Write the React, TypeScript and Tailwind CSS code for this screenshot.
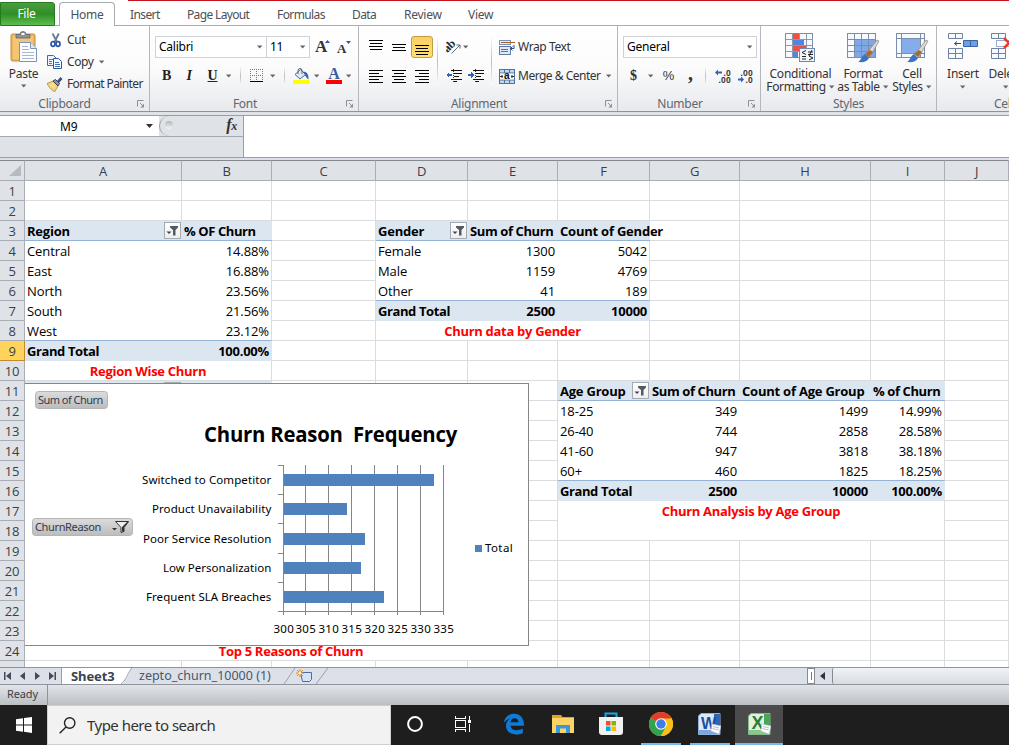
import React from "react";

type P = { className?: string };

const Caret = ({ className = "" }: P) => (
  <svg className={`shrink-0 ${className}`} width="6" height="4" viewBox="0 0 6 4">
    <path d="M0 0.5h5.4L2.7 3.5z" fill="#666" />
  </svg>
);

const Sep = ({ className = "" }: P) => (
  <div className={`w-px shrink-0 bg-linear-to-b from-white via-[#b9bcc2] to-white ${className}`} />
);

const Launcher = () => (
  <svg width="8" height="8" viewBox="0 0 8 8" fill="none" stroke="#8b8f96">
    <path d="M.5 6.5v-6h6" />
    <path d="M3 3l3.500 3.500" />
    <path d="M7 3.500V7.500H3.500z" fill="#8b8f96" stroke="none" />
  </svg>
);

const Lines = ({ rows }: { rows: [number, number][] }) => (
  <svg width="14" height={rows.length * 3} viewBox={`0 0 14 ${rows.length * 3}`} shapeRendering="crispEdges">
    {rows.map(([x, w], i) => (
      <rect key={i} x={x} y={i * 3} width={w} height="1" fill="#000" />
    ))}
  </svg>
);

const PasteIcon = () => (
  <svg width="28" height="32" viewBox="0 0 28 32">
    <rect x="1" y="3" width="24" height="27" rx="1.5" fill="#ecb65c" stroke="#c98f3a" />
    <rect x="3" y="5" width="20" height="23" fill="#f3c676" />
    <path d="M6 7V3.5h4a3 3 0 0 1 6 0h4V7z" fill="#8d939b" stroke="#5d636b" strokeWidth=".8" />
    <rect x="11.5" y="2" width="3" height="2" fill="#fff" />
    <path d="M9.500 11.500h11l6 6v13h-17z" fill="#fbfcfe" stroke="#7d93b5" />
    <path d="M20.500 11.500v6h6" fill="#dfe7f3" stroke="#7d93b5" />
    <path d="M12 15.500h6M12 18.500h7M12 21.500h12M12 24.500h12M12 27.500h12" stroke="#a9b6cb" />
  </svg>
);

const CutIcon = () => (
  <svg width="12" height="15" viewBox="0 0 12 15" fill="none">
    <path d="M2.500 .5L7 9M8.800 .5L4.600 9" stroke="#6d7e97" strokeWidth="1.900" />
    <ellipse cx="3" cy="11" rx="2" ry="2.300" stroke="#2a56a5" strokeWidth="1.700" />
    <ellipse cx="8" cy="11" rx="2" ry="2.300" stroke="#2a56a5" strokeWidth="1.700" />
  </svg>
);

const CopyIcon = () => (
  <svg width="16" height="14" viewBox="0 0 16 14">
    <path d="M.5 .5h6l2.500 2.500v7.500h-8.500z" fill="#eef4fc" stroke="#3f69ab" />
    <path d="M2 4.500h4M2 6.500h3M2 8.500h3" stroke="#4f80c6" />
    <path d="M6.500 3.500h5l3 3v7h-8z" fill="#f6faff" stroke="#2b56a0" />
    <path d="M8 7.500h4M8 9.500h5M8 11.500h5" stroke="#3f70bc" />
  </svg>
);

const PainterIcon = () => (
  <svg width="16" height="15" viewBox="0 0 16 15">
    <path d="M0 6.500l6-2.500 5 5-3 5.500c-3-.5-6-4-8-8z" fill="#f2d377" stroke="#a9812c" strokeWidth=".7" />
    <path d="M3 7.500l3 3M5 6l3 4" stroke="#fff3c4" />
    <path d="M6 4l2.500-1.500 4 4L11 9z" fill="#8d93a0" stroke="#34383f" strokeWidth=".9" />
    <path d="M10 4l3.500-4L15.500 2 12 6z" fill="#3a4d8b" />
  </svg>
);

const BorderIcon = () => (
  <svg width="14" height="14" viewBox="0 0 14 14" shapeRendering="crispEdges">
    <path d="M0 .5h13M0 6.500h13M.5 0v12M6.500 0v12M12.500 0v12" stroke="#777" strokeDasharray="1 1" />
    <rect y="12" width="13" height="1" fill="#000" />
  </svg>
);

const BucketIcon = () => (
  <svg width="16" height="16" viewBox="0 0 16 16">
    <path d="M2 6.500L7.500 1.500l5 5L7 11z" fill="#dfe7f2" stroke="#4e6a96" />
    <path d="M5 6V2.500a2 2 0 0 1 4 0V6" fill="none" stroke="#5a6980" />
    <path d="M10 3.500c4 0 6 3 5.500 8-1.500-1-3-3-3.500-4.500z" fill="#3468b5" />
    <rect y="12" width="16" height="4" fill="#ff0" />
  </svg>
);

const FontColorIcon = () => (
  <div className="flex w-[16px] flex-col items-center">
    <span className="h-[12px] font-[Liberation_Serif] text-[16px] font-bold leading-[12px] text-[#3c5e9c]">A</span>
    <div className="h-[4px] w-[16px] bg-[#f00]" />
  </div>
);

const OrientIcon = () => (
  <svg width="16" height="16" viewBox="0 0 16 16">
    <text x="-1" y="10" transform="rotate(-45 5 9)" fontFamily="Liberation Serif" fontWeight="bold" fontSize="12" fill="#222">ab</text>
    <path d="M5.500 14.500L14 6M14 9.500V6h-3.500" stroke="#666" fill="none" />
  </svg>
);

const IndentIcon = ({ flip = false }: { flip?: boolean }) => (
  <svg width="16" height="14" viewBox="0 0 16 14" shapeRendering="crispEdges">
    <path d="M5 1.500h11M8 4.500h8M8 7.500h5M5 10.500h11M7 12.500h4" stroke="#111" />
    <path d="M7.500 0v14" stroke="#333" strokeDasharray="1 1" />
    {flip ? (
      <path d="M0 5h3V3l3 3-3 3V7H0z" fill="#2d62bd" />
    ) : (
      <path d="M6 5H3V3L0 6l3 3V7h3z" fill="#2d62bd" />
    )}
  </svg>
);

const WrapIcon = () => (
  <svg width="16" height="15" viewBox="0 0 16 15">
    <rect x=".5" y=".5" width="11" height="4" fill="#e4ecf7" stroke="#7d93b5" />
    <rect x=".5" y="6.500" width="11" height="8" fill="#dfe8f5" stroke="#5f7ba6" />
    <path d="M2 2.500h14" stroke="#a5622b" />
    <path d="M2 9.500h7M2 11.500h7" stroke="#a5622b" />
    <path d="M15 5v3.500h-3M13.500 6.500l-2 2 2 2" stroke="#2c4f8f" fill="none" />
  </svg>
);

const MergeIcon = () => (
  <svg width="16" height="15" viewBox="0 0 16 15">
    <rect x=".5" y=".5" width="15" height="14" fill="#c5d6ee" stroke="#50709f" />
    <path d="M5.500 0v4M10.500 0v4M5.500 11v4M10.500 11v4M0 4h16M0 11h16" stroke="#50709f" />
    <rect x="1" y="4.500" width="14" height="6" fill="#f4f7fc" />
    <text x="5" y="10" fontFamily="Liberation Sans" fontWeight="bold" fontSize="10" fill="#111">a</text>
    <path d="M1 7.500h3M3 6v3M15 7.500h-3M13 6v3" stroke="#333" />
  </svg>
);

const DecIcon = ({ inc }: { inc: boolean }) => (
  <svg width="17" height="14" viewBox="0 0 17 14">
    <text x={inc ? 8.5 : 3.5} y="6.500" textLength={inc ? 7 : 12} fontFamily="Liberation Sans" fontSize="8.500" fontWeight="bold" fill="#333">{inc ? ".0" : ".00"}</text>
    <text x={inc ? 3.5 : 8.5} y="13.500" textLength={inc ? 12 : 7} fontFamily="Liberation Sans" fontSize="8.500" fontWeight="bold" fill="#333">{inc ? ".00" : ".0"}</text>
    {inc ? (
      <path d="M7 2.500H3V.5L0 3.500l3 3v-2h4z" fill="#2d62bd" />
    ) : (
      <path d="M1 9.500h3v-2l3 3-3 3v-2H1z" fill="#2d62bd" />
    )}
  </svg>
);

const Brush = () => (
  <g>
    <path d="M30 7l2 1-9 16-4-3z" fill="#d9d9d9" stroke="#8a8177" strokeWidth=".7" />
    <path d="M23 17l3 2-4 5-4-3z" fill="#a66a36" />
    <path d="M18 21l4 4c-2 4-6 4.500-11 4 3-1 3-6 7-8z" fill="#3d72c2" />
  </g>
);

const CondIcon = () => (
  <svg width="32" height="30" viewBox="0 0 32 30">
    <rect x=".5" y=".5" width="27" height="24" fill="#f6f9fd" stroke="#7c8da8" />
    <path d="M7.500 0v25M14.500 0v25M21.500 0v25M0 6.500h28M0 12.500h28M0 18.500h28" stroke="#8b9ab2" />
    <path d="M8 1h6v5H8zM8 13h13v5H8z" fill="#ee5142" />
    <path d="M8 7h11v5H8zM8 19h5v6H8z" fill="#4f87e0" />
    <rect x="14.500" y="15.500" width="15" height="13" fill="#f2f5fa" stroke="#7089ae" />
    <path d="M21 17.500l-4 2 4 2M17 23.500h4M17 26h4M23 19h5M23 21.500h5M27 17l-3 6M24 23l4 2-4 2" stroke="#222" fill="none" />
  </svg>
);

const TableIcon = () => (
  <svg width="33" height="31" viewBox="0 0 33 31">
    <rect x=".5" y=".5" width="28" height="24" fill="#f6f9fd" stroke="#7c8da8" />
    <rect x="8" y="7" width="20" height="17" fill="#7fa8e8" />
    <path d="M7.500 0v25M14.500 0v25M21.500 0v25M0 6.500h28M0 12.500h28M0 18.500h28" stroke="#7c8da8" />
    <Brush />
  </svg>
);

const StyleIcon = () => (
  <svg width="33" height="31" viewBox="0 0 33 31">
    <rect x=".5" y=".5" width="28" height="24" fill="#f6f9fd" stroke="#7c8da8" />
    <path d="M5.500 0v25M24.500 0v25M0 5.500h28M0 20.500h28" stroke="#7c8da8" />
    <rect x="6" y="6" width="18" height="14" fill="#85adec" />
    <Brush />
  </svg>
);

const InsertIcon = () => (
  <svg width="30" height="28" viewBox="0 0 30 28">
    <path d="M.5 .5h14v5H.5zM7.500 .5v5M.5 15.500h14v10H.5zM7.500 15.500v10M.5 20.500h14" fill="#f6f9fd" stroke="#6f83a5" />
    <path d="M15.500 7.500h14v6h-14zM22.500 7.500v6" fill="#6f9ce6" stroke="#3b62a6" />
    <path d="M13 10.500H7M9 8.500l-2.500 2L9 12.500" stroke="#2a4a76" fill="none" />
  </svg>
);

const DeleteIcon = () => (
  <svg width="30" height="28" viewBox="0 0 30 28">
    <path d="M.5 .5h14v5H.5zM7.500 .5v5M.5 15.500h14v10H.5zM7.500 15.500v10M.5 20.500h14" fill="#f6f9fd" stroke="#6f83a5" />
    <rect x="5.500" y="7.500" width="14" height="6" fill="none" stroke="#3b5fa0" strokeDasharray="1 1" />
    <path d="M13 5l10 10M13 15L23 5" stroke="#ee3a24" strokeWidth="2.500" />
  </svg>
);

const Group = ({ label, w, children, pad = "", launcher = true }: { label: string; w: string; children: React.ReactNode; pad?: string; launcher?: boolean }) => (
  <div className={`flex h-[85px] shrink-0 flex-col border-r border-[#b4b7bd] ${w}`}>
    <div className="h-[70px]">{children}</div>
    <div className={`relative flex h-[15px] items-center justify-center text-[#62666d] ${pad}`}>
      {label}
      {launcher && <div className="absolute right-[4px] top-[4px]"><Launcher /></div>}
    </div>
  </div>
);

const Big = ({ icon, a, b, w }: { icon: React.ReactNode; a: string; b?: string; w: string }) => (
  <div className={`flex shrink-0 flex-col items-center ${w}`}>
    <div className="flex h-[41px] pt-[7px]">{icon}</div>
    <div className="h-[13px] whitespace-nowrap leading-[13px]">{a}</div>
    <div className="flex h-[13px] items-center gap-[3px] whitespace-nowrap leading-[13px] tracking-[-0.35px]">
      {b}
      <Caret />
    </div>
  </div>
);

const FilterButton = () => (
  <div className="flex h-[17px] w-[17px] shrink-0 items-center justify-center border border-[#a5abb3] bg-linear-to-b from-white to-[#eceef1]">
    <svg width="13" height="11" viewBox="0 0 13 11">
      <path d="M4 1h8v1.500L9.500 5v5.500h-2.500V5L4 2.500z" fill="#555a62" />
      <path d="M.5 6.500h5L3 9z" fill="#444" />
    </svg>
  </div>
);

type Cell = { t?: string; b?: boolean; r?: boolean; filter?: boolean; span?: number; caption?: boolean };
const COLS = ["A", "B", "C", "D", "E", "F", "G", "H", "I", "J"];

const head = (t: string, filter = false): Cell => ({ t, b: true, filter });
const bold = (t: string, r = true): Cell => ({ t, b: true, r });
const num = (t: string): Cell => ({ t, r: true });

const cells: Record<string, Cell> = {
  A3: head("Region", true), B3: head("% OF Churn"),
  A4: { t: "Central" }, B4: num("14.88%"),
  A5: { t: "East" }, B5: num("16.88%"),
  A6: { t: "North" }, B6: num("23.56%"),
  A7: { t: "South" }, B7: num("21.56%"),
  A8: { t: "West" }, B8: num("23.12%"),
  A9: bold("Grand Total", false), B9: bold("100.00%"),
  A10: { t: "Region Wise Churn", span: 2, caption: true },
  A11: head(""), B11: head(""),
  D3: head("Gender", true), E3: head("Sum of Churn"), F3: head("Count of Gender"),
  D4: { t: "Female" }, E4: num("1300"), F4: num("5042"),
  D5: { t: "Male" }, E5: num("1159"), F5: num("4769"),
  D6: { t: "Other" }, E6: num("41"), F6: num("189"),
  D7: bold("Grand Total", false), E7: bold("2500"), F7: bold("10000"),
  D8: { t: "Churn data by Gender", span: 3, caption: true },
  F11: head("Age Group", true), G11: head("Sum of Churn"), H11: head("Count of Age Group"), I11: head("% of Churn"),
  F12: { t: "18-25" }, G12: num("349"), H12: num("1499"), I12: num("14.99%"),
  F13: { t: "26-40" }, G13: num("744"), H13: num("2858"), I13: num("28.58%"),
  F14: { t: "41-60" }, G14: num("947"), H14: num("3818"), I14: num("38.18%"),
  F15: { t: "60+" }, G15: num("460"), H15: num("1825"), I15: num("18.25%"),
  F16: bold("Grand Total", false), G16: bold("2500"), H16: bold("10000"), I16: bold("100.00%"),
  F17: { t: "Churn Analysis by Age Group", span: 4, caption: true },
  F18: { t: "", span: 4, caption: true },
  A24: { t: "Top 5 Reasons of Churn", span: 5, caption: true },
};

const SPAN: Record<number, string> = { 2: "col-span-2", 3: "col-span-3", 4: "col-span-4", 5: "col-span-5" };
const GRID = "grid grid-cols-[25px_157px_90px_104px_92px_90px_92px_90px_131px_74px_64px]";
const LAST_BODY: Record<string, boolean> = { B: true, F: true, I: true };

function CellBox({ id, row }: { id: string; row: number }) {
  const c = cells[id];
  const col = id[0];
  if (!c) return <div className="border-b border-r border-[#dadcdd]" />;
  if (c.caption)
    return (
      <div className={`flex items-center justify-center border-r border-[#dadcdd] font-bold tracking-[-0.3px] text-[#f00] ${SPAN[c.span!]} ${row === 17 ? "" : "border-b"}`}>
        {c.t}
      </div>
    );
  const below = cells[col + (row + 1)];
  const blueLine = (c.b && !c.r && below && !below.caption) || (!c.b && below?.b);
  const edge = LAST_BODY[col] && !(col === "F" && row > 10) && !c.b;
  return (
    <div
      className={`flex min-w-0 items-center justify-between whitespace-nowrap pl-[2px] ${c.b ? "bg-[#dce6f1] font-bold" : ""} ${blueLine ? "border-b border-b-[#95b3d7]" : ""} ${edge ? "border-r border-r-[#dadcdd] pr-[2px]" : "pr-[3px]"}`}
    >
      {c.r && <span />}
      <span className={c.b ? (c.r ? "tracking-[-0.25px]" : /Churn$|Total/.test(c.t ?? "") ? "tracking-[-0.4px]" : "tracking-[-0.22px]") : "tracking-[-0.1px]"}>{c.t}</span>
      {c.filter && <div className="-mr-[2px]"><FilterButton /></div>}
    </div>
  );
}

function SheetRow({ row }: { row: number }) {
  const out: React.ReactNode[] = [];
  for (let i = 0; i < COLS.length; ) {
    const id = COLS[i] + row;
    out.push(<CellBox key={id} id={id} row={row} />);
    i += cells[id]?.span ?? 1;
  }
  return (
    <div className={`${GRID} h-[20px]`}>
      <div
        className={`flex items-center justify-center border-b border-r text-[#3b3f46] ${
          row === 9 ? "border-[#c28a30] bg-[#ffd45c]" : "border-[#a9adb5] bg-[#dfe2e6]"
        }`}
      >
        {row < 25 ? row : ""}
      </div>
      {out}
    </div>
  );
}

const bars = [
  { y: 91, w: 151, l: "Switched to Competitor" },
  { y: 120, w: 64, l: "Product Unavailability" },
  { y: 150, w: 82, l: "Poor Service Resolution" },
  { y: 179, w: 78, l: "Low Personalization" },
  { y: 208, w: 101, l: "Frequent SLA Breaches" },
];
const LABEL_W = [129, 119, 128, 108, 125];
const gridX = [0, 22, 45, 68, 91, 114, 137, 160];

const Chart = () => (
  <div className="absolute left-[25px] top-[223px] h-[263px] w-[504px] border border-l-0 border-[#868686] bg-white">
    <svg width="503" height="261" viewBox="0 0 503 261" fontFamily="'Noto Sans', sans-serif" fontSize="11.5">
      <defs>
        <linearGradient id="btn" x1="0" y1="0" x2="0" y2="1">
          <stop offset="0" stopColor="#dcdcdc" />
          <stop offset="1" stopColor="#bcbcbc" />
        </linearGradient>
      </defs>
      <rect x="10.500" y="7.500" width="72" height="17" rx="3" fill="url(#btn)" stroke="#b5b5b5" />
      <text x="13" y="20" textLength="65" fill="#333a4a" fontSize="11">Sum of Churn</text>
      <rect x="7.500" y="134.500" width="100" height="17" rx="3" fill="url(#btn)" stroke="#b5b5b5" />
      <text x="10" y="147" textLength="66" fill="#333a4a" fontSize="11">ChurnReason</text>
      <path d="M87 144h5l-2.500 2.500z" fill="#333" />
      <path d="M90.500 137.500h13l-4.500 6v4l-3 1v-5z" fill="#eee" stroke="#333" />
      <path d="M97 143l5-5h1.500l-4.500 5.500v4h-2z" fill="#333" />
      <text x="179" y="58" fontFamily="'Open Sans', sans-serif" fontWeight="bold" fontSize="20.500" textLength="253" lengthAdjust="spacingAndGlyphs" letterSpacing="-0.2">{"Churn Reason\u00a0 Frequency"}</text>
      <g shapeRendering="crispEdges" fill="#868686">
        {gridX.map((x) => (
          <rect key={x} x={258 + x} y="81" width="1" height="150" />
        ))}
        {[81, 110, 139, 169, 198, 227].map((y) => (
          <rect key={y} x="253" y={y} width="6" height="1" />
        ))}
        <rect x="258" y="227" width="161" height="1" />
      </g>
      {bars.map((b, i) => (
        <g key={b.l}>
          <rect x="259" y={b.y - 1} width={b.w - 1} height="12" fill="#4f81bd" />
          <text x={246 - LABEL_W[i]} y={b.y + 9} textLength={LABEL_W[i]}>{b.l}</text>
        </g>
      ))}
      {gridX.map((x, i) => (
        <text key={x} x={248.5 + x} y="249" textLength="20">{300 + i * 5}</text>
      ))}
      <rect x="450" y="161" width="7" height="7" fill="#4f81bd" />
      <text x="460" y="168" textLength="27.500">Total</text>
    </svg>
  </div>
);

const Ribbon = () => (
  <div className="flex h-[86px] overflow-hidden border-b border-[#8f949c] bg-linear-to-b from-white via-[#fbfbfc] to-[#e6e9ed] text-[#333]">
    <Group label="Clipboard" w="w-[150px]" pad="pr-[20px]">
      <div className="flex h-full">
        <div className="flex w-[47px] flex-col items-center">
          <div className="h-[39px] pt-[5px]"><PasteIcon /></div>
          <div className="h-[17px] leading-[17px]">Paste</div>
          <Caret className="mt-[2px]" />
        </div>
        <div className="flex flex-col pt-[3px]">
          <div className="flex h-[22px] items-center"><div className="w-[20px] pl-[3px]"><CutIcon /></div>Cut</div>
          <div className="flex h-[22px] items-center tracking-[-0.4px]"><div className="w-[20px]"><CopyIcon /></div>Copy<Caret className="ml-[5px]" /></div>
          <div className="flex h-[22px] items-center whitespace-nowrap tracking-[-0.62px]"><div className="w-[20px]"><PainterIcon /></div>Format Painter</div>
        </div>
      </div>
    </Group>
    <Group label="Font" w="w-[209px]" pad="pr-[18px]">
      <div className="mt-[10px] flex h-[22px] pl-[5px]">
        <div className="flex w-[112px] items-center justify-between border border-[#cfd2d8] bg-white px-[3px] text-black">Calibri<Caret /></div>
        <div className="flex w-[43px] items-center justify-between border border-l-0 border-[#cfd2d8] bg-white px-[3px] text-black">11<Caret /></div>
        <div className="relative ml-[5px] w-[15px] font-[Liberation_Serif] text-[17px] font-bold leading-[22px]">A
          <svg className="absolute right-0 top-[4px]" width="5" height="3" viewBox="0 0 5 3"><path d="M0 3L2.500 0 5 3z" fill="#2c57a8" /></svg>
        </div>
        <div className="relative ml-[7px] w-[14px] font-[Liberation_Serif] text-[13px] font-bold leading-[25px]">A
          <svg className="absolute right-0 top-[5px]" width="5" height="3" viewBox="0 0 5 3"><path d="M0 0h5L2.500 3z" fill="#2c57a8" /></svg>
        </div>
      </div>
      <div className="mt-[7px] flex h-[22px] items-center pl-[5px] font-[Liberation_Serif] text-[14px] text-[#222]">
        <div className="w-[23px] text-center font-bold">B</div>
        <div className="w-[22px] text-center font-bold italic">I</div>
        <div className="w-[25px] text-center font-bold underline">U</div>
        <Caret className="ml-[1px]" />
        <Sep className="ml-[8px] h-[20px]" />
        <div className="ml-[9px]"><BorderIcon /></div>
        <Caret className="ml-[6px]" />
        <Sep className="ml-[8px] h-[20px]" />
        <div className="ml-[8px]"><BucketIcon /></div>
        <Caret className="ml-[5px]" />
        <div className="ml-[6px]"><FontColorIcon /></div>
        <Caret className="ml-[4px]" />
      </div>
    </Group>
    <Group label="Alignment" w="w-[259px]" pad="pr-[18px]">
      <div className="flex h-full pt-[10px]">
        <div className="flex w-[78px] flex-col gap-[7px]">
          <div className="flex h-[22px]">
            <div className="ml-[10px] w-[23px] pt-[4px]"><Lines rows={[[0, 14], [1, 12], [0, 14], [1, 12]]} /></div>
            <div className="w-[19px] pt-[8px]"><Lines rows={[[0, 14], [1, 12], [0, 14]]} /></div>
            <div className="flex h-[22px] w-[22px] items-start justify-center rounded-[3px] border border-[#c29b46] bg-linear-to-b from-[#fbcf63] to-[#ffe272] pt-[8px]"><Lines rows={[[0, 14], [1, 12], [0, 14], [1, 12]]} /></div>
          </div>
          <div className="flex h-[22px] items-center gap-[9px] pl-[10px] pt-[2px]">
            <Lines rows={[[0, 14], [0, 10], [0, 14], [0, 10], [0, 14]]} />
            <Lines rows={[[0, 14], [2, 10], [0, 14], [2, 10], [0, 14]]} />
            <Lines rows={[[0, 14], [4, 10], [0, 14], [4, 10], [0, 14]]} />
          </div>
        </div>
        <Sep className="h-[50px]" />
        <div className="flex w-[53px] flex-col gap-[7px] pl-[8px]">
          <div className="flex h-[22px] items-center"><OrientIcon /><Caret className="ml-[1px]" /></div>
          <div className="flex h-[22px] items-center gap-[6px]"><IndentIcon /><IndentIcon flip /></div>
        </div>
        <Sep className="h-[50px]" />
        <div className="flex flex-col gap-[7px] whitespace-nowrap pl-[7px]">
          <div className="flex h-[22px] items-center gap-[3px] tracking-[-0.4px]"><WrapIcon />Wrap Text</div>
          <div className="flex h-[22px] items-center gap-[3px] tracking-[-0.5px]"><MergeIcon />Merge &amp; Center<Caret className="ml-[2px]" /></div>
        </div>
      </div>
    </Group>
    <Group label="Number" w="w-[143px]" pad="pr-[18px]">
      <div className="flex h-[32px] pl-[5px] pt-[10px]">
        <div className="flex w-[134px] items-center justify-between border border-[#cfd2d8] bg-white px-[3px] text-black">General<Caret /></div>
      </div>
      <div className="mt-[7px] flex h-[22px] items-center pl-[12px]">
        <span className="font-[Liberation_Serif] text-[14px] font-bold">$</span>
        <Caret className="ml-[11px]" />
        <span className="ml-[9px] font-[Liberation_Sans] text-[13px]">%</span>
        <span className="-mt-[6px] ml-[14px] font-[Liberation_Serif] text-[20px] font-bold leading-[16px]">,</span>
        <Sep className="ml-[12px] h-[20px]" />
        <div className="ml-[9px]"><DecIcon inc /></div>
        <div className="ml-[5px]"><DecIcon inc={false} /></div>
      </div>
    </Group>
    <Group label="Styles" w="w-[176px]" launcher={false}>
      <div className="flex pl-[5px]">
        <Big icon={<CondIcon />} a="Conditional" b="Formatting" w="w-[69px]" />
        <Big icon={<TableIcon />} a="Format" b="as Table" w="w-[56px]" />
        <Big icon={<StyleIcon />} a="Cell" b="Styles" w="w-[42px]" />
      </div>
    </Group>
    <Group label="Cells" w="w-[140px]" launcher={false}>
      <div className="flex pl-[6px]">
        <Big icon={<InsertIcon />} a="Insert" w="w-[40px]" />
        <Big icon={<DeleteIcon />} a="Delete" w="w-[46px]" />
      </div>
    </Group>
  </div>
);

const Nav = ({ d }: { d: string }) => (
  <svg width="8" height="8" viewBox="0 0 8 8"><path d={d} fill="#444b57" /></svg>
);

const Edge = () => (
  <svg width="22" height="22" viewBox="0 0 22 22">
    <path d="M.7 10C1.500 4 5.800.7 11 .7c6.300 0 10.200 4.500 10 12H7.500c.3 3 3 4.600 6.300 4.600 2.200 0 4.200-.6 6-1.700v4.300c-2 1-4.500 1.500-7 1.500-5.800 0-9.800-3.300-9.800-8.700 0-3.300 1.800-6 4.800-7.400C4.800 6 2.500 7.600.7 10zM7.500 9.200h8c-.1-2.600-1.500-4-3.900-4-2.200 0-3.700 1.500-4.100 4z" fill="#0c7cd8" />
  </svg>
);

const Folder = () => (
  <svg width="22" height="19" viewBox="0 0 22 19">
    <path d="M0 0h9l1.500 2H22v15H0z" fill="#e2a21c" />
    <path d="M0 3h22v15H0z" fill="#fbd465" />
    <path d="M4 18V10h14v8h-4v-4.500H8V18z" fill="#3c97dc" />
  </svg>
);

const Store = () => (
  <svg width="24" height="24" viewBox="0 0 24 24">
    <path d="M6.500 6V1.500h11V6" fill="none" stroke="#17a9e6" strokeWidth="2" />
    <path d="M0 5h24v15a3 3 0 0 1-3 3H3a3 3 0 0 1-3-3z" fill="#f1f1f1" />
    <path d="M7 9h4.500v4.500H7z" fill="#f25022" /><path d="M12.500 9H17v4.500h-4.500z" fill="#7fba00" />
    <path d="M7 14.500h4.500V19H7z" fill="#00a4ef" /><path d="M12.500 14.500H17V19h-4.500z" fill="#ffb900" />
  </svg>
);

const Chrome = () => (
  <svg width="24" height="24" viewBox="0 0 24 24">
    <circle cx="12" cy="12" r="12" fill="#fbc116" />
    <path d="M12 12L1.600 6A12 12 0 0 1 22.400 6z" fill="#e33b2e" />
    <path d="M1.600 6A12 12 0 0 0 12 24l5-9-5-3z" fill="#31a350" />
    <path d="M12 6.500h10.700A12 12 0 0 1 12 24l5-9z" fill="#fbc116" />
    <circle cx="12" cy="12" r="5.800" fill="#fff" /><circle cx="12" cy="12" r="4.700" fill="#3f7ee8" />
  </svg>
);

const Office = ({ word }: { word?: boolean }) => (
  <svg width="23" height="23" viewBox="0 0 23 23">
    <path d="M3 .5h19v21H.5V3z" fill={word ? "#dbe8f8" : "#e2f0e0"} stroke={word ? "#8eb0dd" : "#85b98a"} />
    <path d="M16 1h6v20h-6z" fill={word ? "#2f65b5" : "#4ba65a"} />
    <path d="M1 17h21v4H1z" fill={word ? "#7ea6de" : "#8cc68f"} />
    <text x={word ? 3 : 3.5} y="16" fontFamily="Liberation Sans" fontWeight="bold" fontSize={word ? 16 : 18} fill={word ? "#1c4f9f" : "#2a7d35"}>{word ? "W" : "X"}</text>
    <path d="M14 11l9 2-2 8-8-3z" fill="#fff" stroke="#b8c4cf" strokeWidth=".6" />
    <path d="M15 13.500l6 1.500M14.500 15.500l6 1.500" stroke="#9eb0bd" strokeWidth=".8" />
  </svg>
);

const Task = ({ children, w, active, line }: { children: React.ReactNode; w: string; active?: boolean; line?: string }) => (
  <div className={`flex h-[40px] shrink-0 flex-col items-center ${w} ${active ? "bg-[#4b4b4b]" : ""}`}>
    <div className="flex h-[38px] items-center justify-center">{children}</div>
    {line && <div className={`h-[2px] bg-[#76b9ed] ${line}`} />}
  </div>
);

export default function App() {
  return (
    <div className="flex h-[745px] w-[1009px] flex-col overflow-hidden bg-white font-['Noto_Sans',sans-serif] text-[12px] leading-[16px] tracking-[-0.25px]">
      <div className="flex h-[26px] items-end text-[#4c5057]">
        <div className="flex h-[24px] w-[55px] shrink-0 items-center justify-center rounded-tr-[3px] border border-[#237a1c] bg-linear-to-b from-[#4b9c3f] via-[#2f8f27] to-[#5cbd4c] pr-[2px] text-white">File</div>
        <div className="h-full w-[4px] border-b border-[#a7abb2]" />
        <div className="flex h-[24px] w-[56px] shrink-0 items-center justify-center rounded-t-[4px] border border-b-0 border-[#a7abb2]">Home</div>
        <div className="h-full w-[13px] border-b border-[#a7abb2]" />
        <div className="flex h-full flex-1 items-center border-b border-t border-b-[#a7abb2] border-t-[#c4131d] pl-[2px] pt-[3px]">
          <span className="w-[57px] tracking-[-0.6px]">Insert</span>
          <span className="w-[90px] tracking-[-0.65px]">Page Layout</span>
          <span className="w-[75px] tracking-[-0.6px]">Formulas</span>
          <span className="w-[52px] tracking-[-0.6px]">Data</span>
          <span className="w-[64px]">Review</span>
          <span>View</span>
        </div>
      </div>
      <Ribbon />
      <div className="h-[4px] border-b border-[#9a9ea6] bg-[#dfe2e7]" />
      <div className="flex h-[41px]">
        <div className="flex w-[244px] flex-col border-r border-[#9a9ea6] bg-[#dfe2e6]">
          <div className="flex h-[21px] items-center border-b border-[#a4a8b0]">
            <div className="flex h-full w-[159px] items-center bg-white pr-[6px]">
              <span className="flex-1 pl-[60px] pt-px text-black">M9</span>
              <svg width="7" height="4" viewBox="0 0 7 4"><path d="M0 0h7L3.500 4z" fill="#333" /></svg>
            </div>
            <div className="flex h-[20px] flex-1 items-center justify-between rounded-l-[10px] border-l border-[#9a9ea6] pl-[5px] pr-[6px]">
              <div className="-mt-[2px] h-[8px] w-[8px] rounded-full bg-linear-to-b from-[#b3b5b9] to-[#f5f5f6]" />
              <span className="-mt-[2px] font-[Liberation_Serif] text-[16px] font-bold italic text-[#333]">f<span className="text-[12px]">x</span></span>
            </div>
          </div>
        </div>
        <div className="flex-1 bg-white" />
      </div>
      <div className="h-[3px] border-t border-[#9a9ea6] bg-[#dde0ea]" />
      <div className="relative h-[507px] overflow-hidden font-['Open_Sans',sans-serif] text-[13px] leading-[18px] text-black">
        <div className={`${GRID} h-[21px]`}>
          <div className="flex items-end justify-end border-b border-r border-t border-[#a9adb5] border-t-[#84888f] bg-[#dfe2e6] p-[3px]">
            <svg width="12" height="12" viewBox="0 0 12 12"><path d="M12 0v11H0z" fill="#b7bac0" /></svg>
          </div>
          {COLS.map((c) => (
            <div key={c} className="flex items-center justify-center border-b border-r border-t border-[#a9adb5] border-t-[#84888f] bg-[#dfe2e6] text-[#3b3f46]">{c}</div>
          ))}
        </div>
        {Array.from({ length: 25 }, (_, i) => (
          <SheetRow key={i} row={i + 1} />
        ))}
        <div className="absolute left-[164px] top-[222px] h-px w-[17px] bg-[#a5abb3]" />
        <Chart />
      </div>
      <div className="flex h-[18px] border-b border-t border-[#8f949c] bg-[#dce1e9] text-[#4a5568]">
        <div className="flex w-[62px] items-center justify-between border-r border-[#9a9ea6] pl-[4px] pr-[5px]">
          <Nav d="M0 0h1.500v8H0zM7 0v8L2 4z" />
          <Nav d="M6 0v8L1 4z" />
          <Nav d="M2 0v8l5-4z" />
          <Nav d="M1 0v8l5-4zM6.500 0H8v8H6.500z" />
        </div>
        <div className="flex w-[58px] items-center bg-white pl-[9px] text-[13px] font-bold tracking-[-0.1px] text-[#3c4350]">Sheet3</div>
        <svg width="12" height="16" viewBox="0 0 12 16"><path d="M0 0h12C9 4 6 15 1 16H0z" fill="#fff" /><path d="M12 0C9 2 5 15 1 15.500" fill="none" stroke="#9a9ea6" /></svg>
        <div className="flex w-[151px] items-center whitespace-nowrap pl-[7px] text-[12.500px] tracking-[0px]">zepto_churn_10000 (1)</div>
        <svg width="50" height="16" viewBox="0 0 50 16">
          <path d="M12 0L1 16M45 0L33 16" stroke="#9a9ea6" />
          <path d="M17.500 4.500h11v7l-2 2h-7z" fill="#d6e2f5" stroke="#4a6ba8" />
          <path d="M17 1v8M13 5h8M14 2l6 6M20 2l-6 6" stroke="#e08b1d" />
          <circle cx="17" cy="5" r="1.500" fill="#fff3c0" />
        </svg>
        <div className="flex-1" />
        <div className="flex w-[202px]">
          <div className="flex w-[8px] items-center justify-center border border-[#868a92] bg-white"><div className="h-[8px] w-px bg-[#777]" /></div>
          <div className="flex w-[17px] items-center pl-[5px]"><svg width="6" height="8" viewBox="0 0 6 8"><path d="M5 0v8L0 4z" fill="#333" /></svg></div>
          <div className="flex-1 rounded-l-[2px] border-l border-[#868a92] bg-linear-to-b from-[#eff2f7] to-[#d9dde3]" />
        </div>
      </div>
      <div className="flex h-[20px] bg-linear-to-b from-[#e2e4e9] to-[#bbbfc4] text-[11px] text-[#3c4048]">
        <div className="flex w-[48px] items-center border-r border-[#8f949c] pb-[2px] pl-[7px] tracking-[-0.15px]">Ready</div>
      </div>
      <div className="flex h-[40px] bg-[#1e1e1e]">
        <div className="flex w-[47px] shrink-0 items-center justify-center">
          <svg width="16" height="16" viewBox="0 0 16 16" fill="#fff"><path d="M0 2.200L7 1.200V7.500H0zM8 1l8-1v7.500H8zM0 8.500h7v6.200L0 13.800zM8 8.500h8V16l-8-1.200z" /></svg>
        </div>
        <div className="flex w-[344px] shrink-0 items-center border border-[#cfcfcf] bg-[#f2f2f2] pl-[11px] text-[15px] text-[#333]">
          <svg width="17" height="17" viewBox="0 0 17 17" fill="none" stroke="#222" strokeWidth="1.400"><circle cx="10.700" cy="6" r="5.200" /><path d="M7 10L.7 16.300" /></svg>
          <span className="ml-[11px] tracking-[-0.52px]">Type here to search</span>
        </div>
        <Task w="w-[48px]"><svg width="16" height="16" viewBox="0 0 16 16"><circle cx="8" cy="8" r="6.900" fill="none" stroke="#fff" strokeWidth="2" /></svg></Task>
        <Task w="w-[48px]">
          <svg width="17" height="16" viewBox="0 0 17 16" fill="none" stroke="#fff" shapeRendering="crispEdges"><path d="M.5 0v2.500h10V0M.5 16v-2.500h10V16M.5 4.500h10v7H.5zM14.500 0v4M14.500 8v8" /><rect x="13" y="4" width="3" height="3" fill="#fff" stroke="none" /></svg>
        </Task>
        <Task w="w-[54px]"><Edge /></Task>
        <Task w="w-[44px]"><Folder /></Task>
        <Task w="w-[52px]"><Store /></Task>
        <Task w="w-[48px]" line="w-[40px]"><Chrome /></Task>
        <Task w="w-[49px]" line="w-[40px]"><Office word /></Task>
        <div className="w-px" />
        <Task w="w-[48px]" active line="w-[48px]"><Office /></Task>
      </div>
    </div>
  );
}
